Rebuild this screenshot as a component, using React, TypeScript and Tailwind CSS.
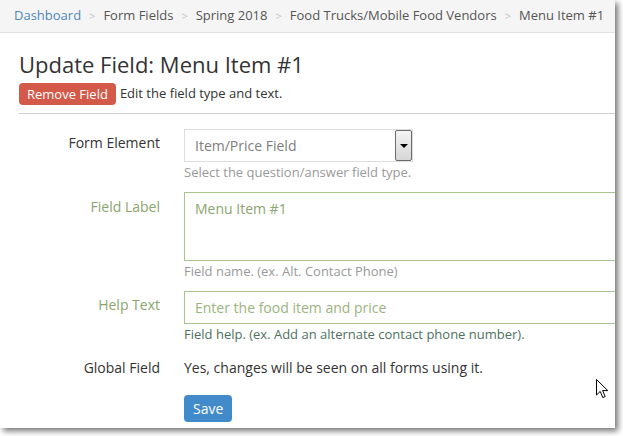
const crumbs = ["Form Fields", "Spring 2018", "Food Trucks/Mobile Food Vendors", "Menu Item #1"];

function Cursor() {
  return (
    <svg className="absolute left-[596px] top-[379px]" width="13" height="20" viewBox="0 0 13 20">
      <path
        d="M0.5 0.5 L0.5 16 L4.2 12.4 L6.8 18.6 L9.2 17.6 L6.6 11.6 L11.8 11.6 Z"
        fill="#fff"
        stroke="#000"
        strokeWidth="1"
        strokeLinejoin="round"
      />
    </svg>
  );
}

export default function App() {
  return (
    <div className="w-[623px] h-[436px] bg-white relative overflow-hidden font-['Open_Sans',sans-serif]">
      <div className="w-[615px] h-[428px] bg-white overflow-hidden shadow-[3px_3px_6px_rgba(0,0,0,0.55)] relative">
        <div className="h-[33px] bg-[#f5f5f5] border-b border-[#e3e3e3] flex items-center px-[14px] text-[13px] text-[#555] whitespace-nowrap">
          <span className="text-[#4f88b8]">Dashboard</span>
          {crumbs.map((c) => (
            <span key={c} className="flex items-center shrink-0">
              <span className="text-[#c4c4c4] px-[8px] text-[11px]">&gt;</span>
              <span>{c}</span>
            </span>
          ))}
        </div>

        <div className="pl-[19px]">
          <h1 className="text-[22px] leading-[30px] text-[#333] mt-[16px]">Update Field: Menu Item #1</h1>
          <div className="flex items-center mt-[4px] text-[13px] text-[#333]">
            <button className="bg-[#d35a48] text-white rounded-[4px] h-[22px] px-[8px] leading-[22px]">Remove Field</button>
            <span className="ml-[4px]">Edit the field type and text.</span>
          </div>
          <div className="border-t border-[#cfcfcf] mt-[8px]" />

          <div className="flex mt-[15px] text-[13px]">
            <div className="w-[141px] shrink-0 text-right pt-[4px] text-[14px] leading-[20px] text-[#333]">Form Element</div>
            <div className="ml-[24px]">
              <div className="w-[229px] h-[33px] border border-[#ddd] flex items-center relative">
                <span className="pl-[10px] text-[14px] text-[#808080]">Item/Price Field</span>
                <div className="absolute right-0 top-0 w-[17px] h-[31px] border border-[#6b6b6b] rounded-[2px] bg-gradient-to-b from-[#f4f4f4] to-[#d6d6d6] flex items-center justify-center">
                  <span className="w-0 h-0 border-l-[4px] border-r-[4px] border-t-[4px] border-l-transparent border-r-transparent border-t-black" />
                </div>
              </div>
              <div className="text-[#999] mt-[1px] leading-[18px]">Select the question/answer field type.</div>
            </div>
          </div>

          <div className="flex mt-[11px] text-[13px]">
            <div className="w-[141px] shrink-0 text-right pt-[5px] text-[14px] leading-[20px] text-[#8ba56e]">Field Label</div>
            <div className="ml-[24px]">
              <div className="w-[460px] h-[69px] border border-[#a9c48c] pl-[10px] pt-[5px] text-[14px] text-[#8ba56e]">Menu Item #1</div>
              <div className="text-[#999] mt-[1px] leading-[18px]">Field name. (ex. Alt. Contact Phone)</div>
            </div>
          </div>

          <div className="flex mt-[11px] text-[13px]">
            <div className="w-[141px] shrink-0 text-right pt-[4px] text-[14px] leading-[20px] text-[#8ba56e]">Help Text</div>
            <div className="ml-[24px]">
              <div className="w-[460px] h-[33px] border border-[#a9c48c] pl-[10px] flex items-center text-[14px] text-[#9bb47e]">Enter the food item and price</div>
              <div className="text-[#4f7160] mt-[1px] leading-[18px]">Field help. (ex. Add an alternate contact phone number).</div>
            </div>
          </div>

          <div className="flex mt-[15px] text-[14px] leading-[20px] text-[#333]">
            <div className="w-[141px] shrink-0 text-right">Global Field</div>
            <div className="ml-[24px]">Yes, changes will be seen on all forms using it.</div>
          </div>

          <div className="ml-[165px] mt-[17px]">
            <button className="bg-[#428bca] text-white text-[14px] rounded-[4px] h-[27px] px-[9px]">Save</button>
          </div>
        </div>

        <Cursor />
      </div>
    </div>
  );
}
